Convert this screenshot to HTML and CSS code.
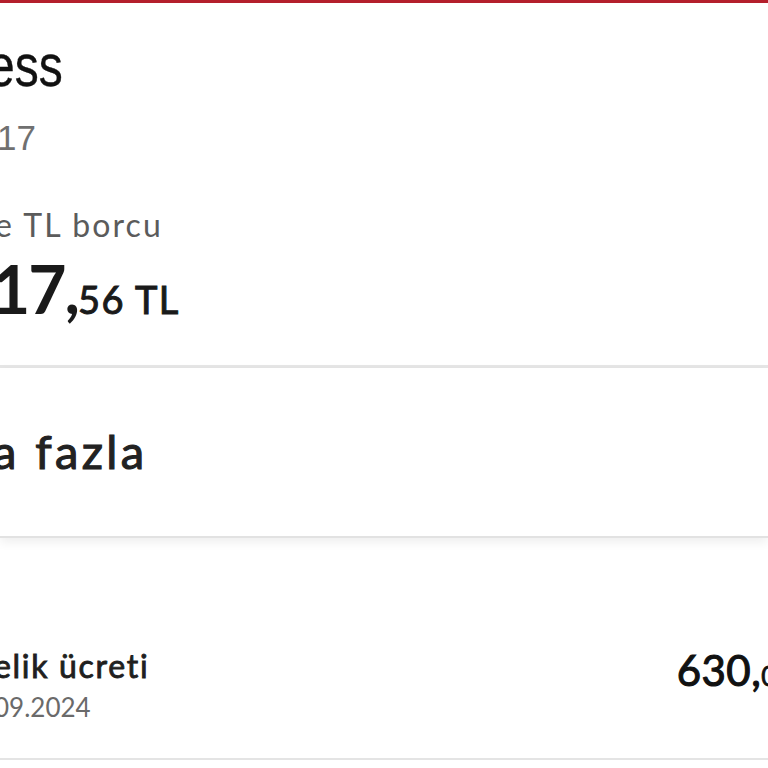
FILE: index.html
```html
<!DOCTYPE html>
<html lang="tr">
<head>
<meta charset="utf-8">
<link rel="stylesheet" href="styles.css">
</head>
<body>
<div class="screen">
  <div class="topbar"></div>
  <section class="card card-summary">
    <div class="title"><span class="title-text">ess</span></div>
    <div class="card-no">17</div>
    <div class="debt-label">e TL borcu</div>
    <div class="debt-amount"><span class="amt-big">17,</span><span class="amt-small">56 TL</span></div>
  </section>
  <section class="card card-more">
    <div class="more-text">a fazla</div>
  </section>
  <section class="list">
    <div class="row">
      <div class="row-left">
        <div class="row-title">elik ücreti</div>
        <div class="row-date">09.2024</div>
      </div>
      <div class="row-amount"><span class="ra-big">630,</span><span class="ra-small">00 TL</span></div>
    </div>
  </section>
</div>
</body>
</html>
```
FILE: styles.css
```css
html, body {
  margin: 0;
  padding: 0;
  background: #ffffff;
}
.screen {
  width: 768px;
  height: 768px;
  overflow: hidden;
  background: #ffffff;
  display: flex;
  flex-direction: column;
}
.topbar {
  height: 3px;
  background: #b41f2c;
  box-shadow: 0 1px 3px rgba(180, 31, 44, 0.15);
  flex: none;
}
.card {
  background: #ffffff;
  flex: none;
}
.card-summary {
  height: 362px;
  border-bottom: 3px solid #e6e6e6;
  box-sizing: content-box;
  display: flex;
  flex-direction: column;
  font-family: "Lato", "Liberation Sans", sans-serif;
}
.title {
  margin-top: 33px;
  height: 60px;
  line-height: 60px;
  font-family: "Liberation Sans", Arial, sans-serif;
  font-size: 60px;
  color: #111111;
  white-space: nowrap;
  -webkit-text-stroke: 0.4px #111111;
}
.title-text {
  display: inline-block;
  transform: scaleX(0.8);
  transform-origin: left center;
  margin-left: -12px;
}
.card-no {
  margin-top: 25px;
  height: 34px;
  line-height: 34px;
  font-family: "Liberation Sans", Arial, sans-serif;
  font-size: 35px;
  color: #707070;
  margin-left: -3px;
}
.debt-label {
  margin-top: 54px;
  font-size: 32px;
  line-height: 32px;
  color: #5b5b5b;
  letter-spacing: 2.1px;
  margin-left: -5px;
}
.debt-amount {
  margin-top: 18px;
  line-height: 60px;
  white-space: nowrap;
  margin-left: -8px;
  color: #1a1a1a;
}
.amt-big {
  font-size: 66px;
  font-weight: 700;
  letter-spacing: -2px;
}
.amt-small {
  font-size: 38px;
  font-weight: 400;
  letter-spacing: 1.4px;
  -webkit-text-stroke: 1px #1a1a1a;
}
.card-more {
  height: 168px;
  border-bottom: 2px solid #e2e2e2;
  box-shadow: 0 4px 10px rgba(0, 0, 0, 0.07);
  position: relative;
  z-index: 1;
  display: flex;
  align-items: center;
}
.more-text {
  font-family: "Lato", "Liberation Sans", sans-serif;
  font-size: 47px;
  font-weight: 400;
  -webkit-text-stroke: 1.1px #222222;
  color: #222222;
  margin-left: -7px;
  margin-top: -2px;
  letter-spacing: 3.4px;
}
.list {
  height: 220px;
  border-bottom: 2px solid #e4e4e4;
  background: #ffffff;
  flex: none;
  display: flex;
  flex-direction: column;
  justify-content: flex-end;
  font-family: "Lato", "Liberation Sans", sans-serif;
}
.row {
  display: flex;
  justify-content: space-between;
  align-items: flex-start;
  padding-bottom: 34px;
}
.row-left {
  display: flex;
  flex-direction: column;
  margin-left: -6px;
}
.row-title {
  font-size: 32px;
  font-weight: 400;
  -webkit-text-stroke: 0.9px #1f1f1f;
  color: #1f1f1f;
  line-height: 36px;
  letter-spacing: 1.7px;
}
.row-date {
  font-size: 26px;
  color: #6a6a6a;
  line-height: 34px;
  margin-top: 6px;
}
.row-amount {
  white-space: nowrap;
  color: #111111;
  margin-right: -58px;
  line-height: 40px;
  margin-top: 2px;
}
.ra-big {
  font-size: 42px;
  font-weight: 400;
  -webkit-text-stroke: 1.1px #111111;
  letter-spacing: 0.5px;
}
.ra-small {
  font-size: 26px;
  font-weight: 400;
  -webkit-text-stroke: 0.8px #111111;
}
```
